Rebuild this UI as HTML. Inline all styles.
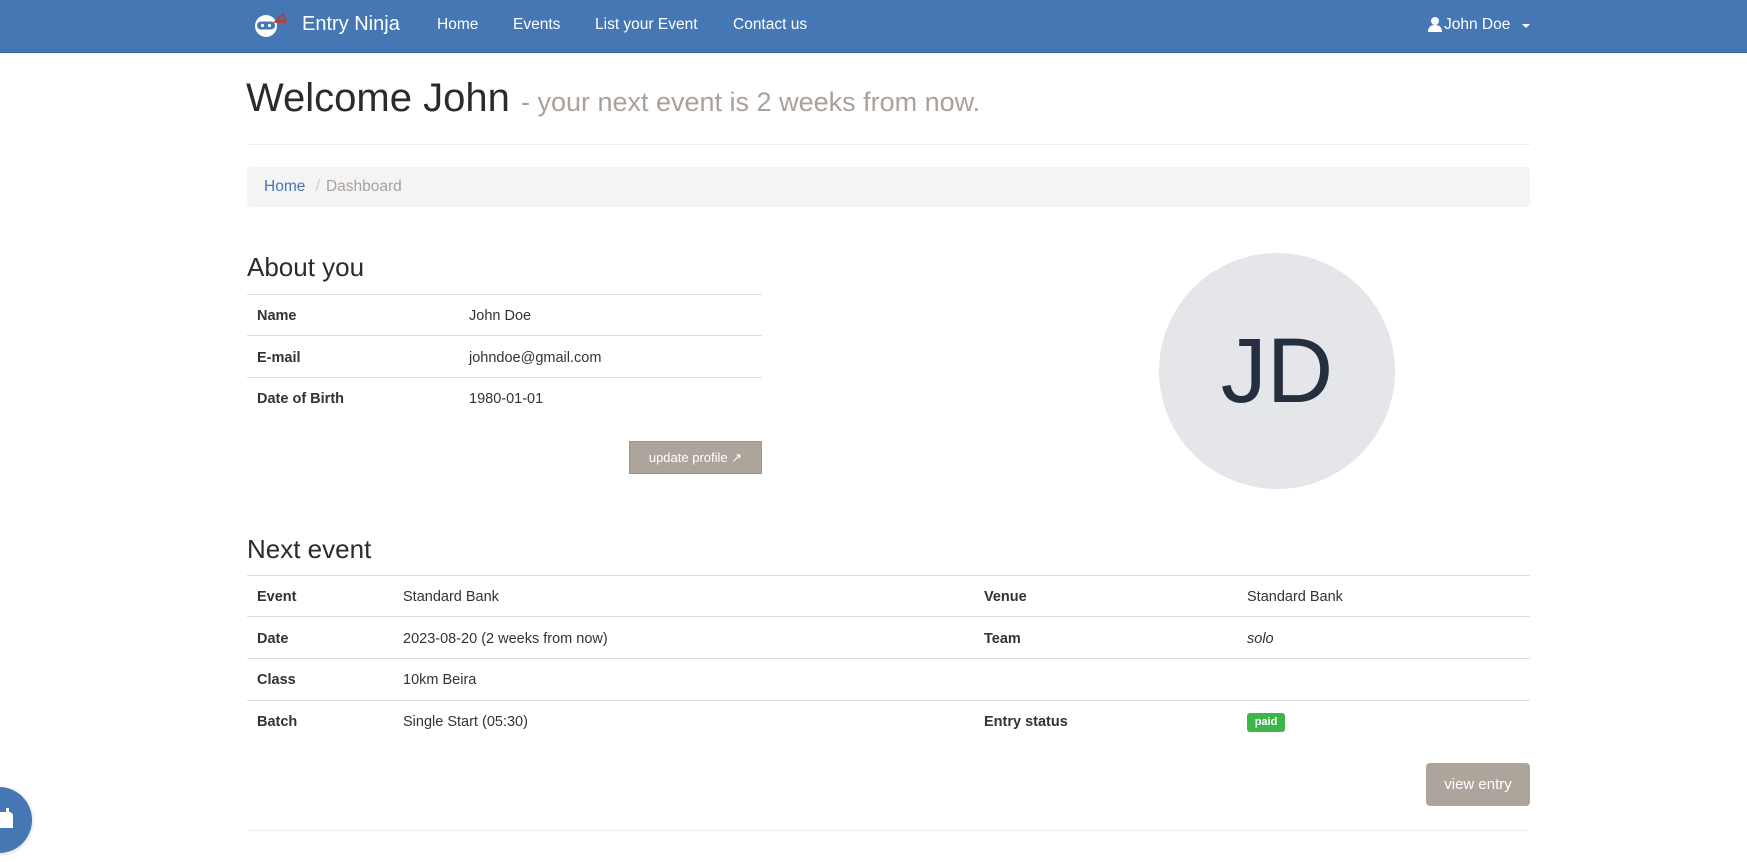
<!DOCTYPE html>
<html><head><meta charset="utf-8"><style>
*{box-sizing:border-box;margin:0;padding:0}
body{width:1747px;height:862px;overflow:hidden;background:#fff;font-family:"Liberation Sans",sans-serif;color:#333;position:relative;font-size:15px}
.abs{position:absolute;white-space:nowrap}
.nav{position:absolute;left:0;top:0;width:1747px;height:53px;background:#4477b3;border-bottom:1px solid #3a6597}
.nav .abs{color:#fff;font-size:15.5px;top:16px}
.line{position:absolute;height:1px;background:#ddd}
.lbl{font-weight:bold;font-size:14.5px}
.val{font-size:14.5px}
</style></head><body>
<div class="nav">
<svg class="abs" style="left:253px;top:8px" width="38" height="34" viewBox="0 0 38 34">
<circle cx="13" cy="18" r="11" fill="#fff"/>
<rect x="4" y="13.5" width="18" height="8" rx="4" fill="#4477b3"/>
<circle cx="9.5" cy="17.5" r="1.6" fill="#fff"/><circle cx="16.5" cy="17.5" r="1.6" fill="#fff"/>
<path d="M22 14 L30 6 L33 14 Z M22 14 L33 11" stroke="#c0392b" stroke-width="1.6" fill="none"/>
</svg>
<div class="abs" style="left:302px;top:13px;font-size:20px">Entry Ninja</div>
<div class="abs" style="left:437px">Home</div>
<div class="abs" style="left:513px">Events</div>
<div class="abs" style="left:595px">List your Event</div>
<div class="abs" style="left:733px">Contact us</div>
<svg class="abs" style="left:1428px;top:16px" width="14" height="16" viewBox="0 0 14 16"><circle cx="7" cy="5" r="4" fill="#fff"/><path d="M0 16 Q0 9 7 9 Q14 9 14 16Z" fill="#fff"/></svg>
<div class="abs" style="left:1444px">John Doe</div>
<div class="abs" style="left:1522px;top:24px;width:0;height:0;border-left:4px solid transparent;border-right:4px solid transparent;border-top:4px solid #fff"></div>
</div>
<div class="abs" style="left:246px;top:76px;font-size:40px;color:#2b2b2b">Welcome John <span style="font-size:27px;color:#aaa19a">- your next event is 2 weeks from now.</span></div>
<div class="line" style="left:247px;top:144px;width:1283px;background:#eee"></div>
<div class="abs" style="left:247px;top:167px;width:1283px;height:40px;background:#f4f4f4;border-radius:4px"></div>
<div class="abs" style="left:264px;top:178px;font-size:15.5px;color:#4477b3">Home <span style="color:#ccc;padding:0 6px">/</span><span style="color:#aaa19a">Dashboard</span></div>

<div class="abs" style="left:247px;top:252px;font-size:26px;color:#2b2b2b">About you</div>
<div class="line" style="left:247px;top:294px;width:515px"></div>
<div class="line" style="left:247px;top:335px;width:515px"></div>
<div class="line" style="left:247px;top:377px;width:515px"></div>
<div class="abs lbl" style="left:257px;top:308px">Name</div><div class="abs val" style="left:469px;top:308px">John Doe</div>
<div class="abs lbl" style="left:257px;top:350px">E-mail</div><div class="abs val" style="left:469px;top:350px">johndoe@gmail.com</div>
<div class="abs lbl" style="left:257px;top:391px">Date of Birth</div><div class="abs val" style="left:469px;top:391px">1980-01-01</div>
<div class="abs" style="left:629px;top:441px;width:133px;height:33px;background:#ada59c;border:1px solid #9e968d;color:#fff;font-size:13px;line-height:31px;text-align:center">update profile &#x2197;</div>

<div class="abs" style="left:1159px;top:253px;width:236px;height:236px;border-radius:50%;background:#e5e6ea;color:#262f40;font-size:92px;text-align:center;line-height:236px">JD</div>

<div class="abs" style="left:247px;top:534px;font-size:26px;color:#2b2b2b">Next event</div>
<div class="line" style="left:247px;top:575px;width:1283px"></div>
<div class="line" style="left:247px;top:616px;width:1283px"></div>
<div class="line" style="left:247px;top:658px;width:1283px"></div>
<div class="line" style="left:247px;top:700px;width:1283px"></div>
<div class="abs lbl" style="left:257px;top:589px">Event</div><div class="abs val" style="left:403px;top:589px">Standard Bank</div>
<div class="abs lbl" style="left:984px;top:589px">Venue</div><div class="abs val" style="left:1247px;top:589px">Standard Bank</div>
<div class="abs lbl" style="left:257px;top:631px">Date</div><div class="abs val" style="left:403px;top:631px">2023-08-20 (2 weeks from now)</div>
<div class="abs lbl" style="left:984px;top:631px">Team</div><div class="abs val" style="left:1247px;top:631px;font-style:italic">solo</div>
<div class="abs lbl" style="left:257px;top:672px">Class</div><div class="abs val" style="left:403px;top:672px">10km Beira</div>
<div class="abs lbl" style="left:257px;top:714px">Batch</div><div class="abs val" style="left:403px;top:714px">Single Start (05:30)</div>
<div class="abs lbl" style="left:984px;top:714px">Entry status</div>
<div class="abs" style="left:1247px;top:713px;width:38px;height:19px;background:#3cb54a;border-radius:3px;color:#fff;font-weight:bold;font-size:11px;text-align:center;line-height:19px">paid</div>
<div class="abs" style="left:1426px;top:763px;width:104px;height:43px;background:#ada59c;border-radius:4px;color:#fff;font-size:15px;text-align:center;line-height:43px">view entry</div>
<div class="line" style="left:247px;top:830px;width:1283px;background:#eee"></div>

<div class="abs" style="left:-34px;top:787px;width:66px;height:66px;border-radius:50%;background:#4477b3;box-shadow:0 1px 4px rgba(0,0,0,.2)"></div>
<svg class="abs" style="left:0;top:806px" width="14" height="28" viewBox="0 0 14 28"><path d="M0 6 H6 V2 H9 V6 Q13 6 13 10 V22 H0Z" fill="#fff"/></svg>
</body></html>
